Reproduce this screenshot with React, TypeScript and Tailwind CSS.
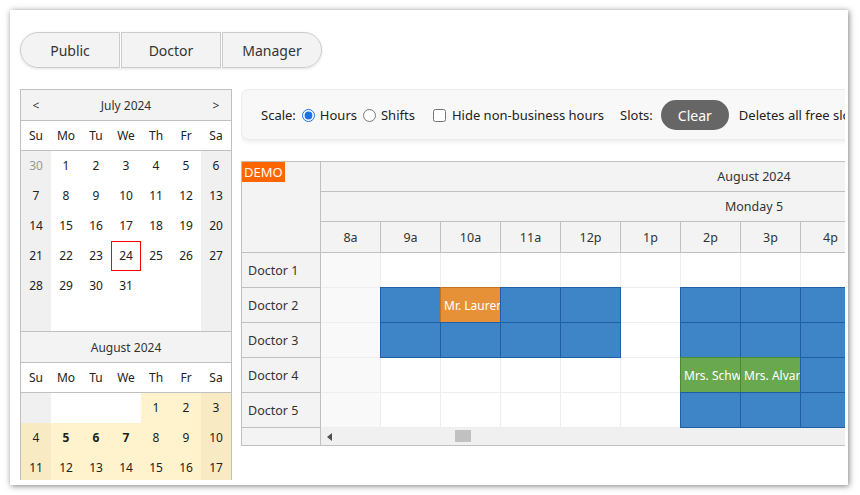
const july: { d: number; out?: boolean }[][] = [
  [{ d: 30, out: true }, { d: 1 }, { d: 2 }, { d: 3 }, { d: 4 }, { d: 5 }, { d: 6 }],
  [{ d: 7 }, { d: 8 }, { d: 9 }, { d: 10 }, { d: 11 }, { d: 12 }, { d: 13 }],
  [{ d: 14 }, { d: 15 }, { d: 16 }, { d: 17 }, { d: 18 }, { d: 19 }, { d: 20 }],
  [{ d: 21 }, { d: 22 }, { d: 23 }, { d: 24 }, { d: 25 }, { d: 26 }, { d: 27 }],
  [{ d: 28 }, { d: 29 }, { d: 30 }, { d: 31 }, { d: 0 }, { d: 0 }, { d: 0 }],
  [{ d: 0 }, { d: 0 }, { d: 0 }, { d: 0 }, { d: 0 }, { d: 0 }, { d: 0 }],
];

const august: number[][] = [
  [0, 0, 0, 0, 1, 2, 3],
  [4, 5, 6, 7, 8, 9, 10],
  [11, 12, 13, 14, 15, 16, 17],
];

const dayNames = ["Su", "Mo", "Tu", "We", "Th", "Fr", "Sa"];
const hours = ["8a", "9a", "10a", "11a", "12p", "1p", "2p", "3p", "4p", "5p"];

type Slot = { kind: "free" | "booked" | "confirmed"; text?: string };

// slots per doctor, keyed by hour index
const slots: Record<number, Slot>[] = [
  {},
  {
    1: { kind: "free" },
    2: { kind: "booked", text: "Mr. Laurent" },
    3: { kind: "free" },
    4: { kind: "free" },
    6: { kind: "free" },
    7: { kind: "free" },
    8: { kind: "free" },
    9: { kind: "free" },
  },
  {
    1: { kind: "free" },
    2: { kind: "free" },
    3: { kind: "free" },
    4: { kind: "free" },
    6: { kind: "free" },
    7: { kind: "free" },
    8: { kind: "free" },
    9: { kind: "free" },
  },
  {
    6: { kind: "confirmed", text: "Mrs. Schwartz" },
    7: { kind: "confirmed", text: "Mrs. Alvarez" },
    8: { kind: "free" },
    9: { kind: "free" },
  },
  {
    6: { kind: "free" },
    7: { kind: "free" },
    8: { kind: "free" },
    9: { kind: "free" },
  },
];

const slotStyle: Record<Slot["kind"], string> = {
  free: "bg-[#3d85c6] border-[#1f5fa3]",
  booked: "bg-[#e69138] border-[#c4731f]",
  confirmed: "bg-[#6aa84f] border-[#4b8a33]",
};

function ViewSwitcher() {
  const items = ["Public", "Doctor", "Manager"];
  return (
    <div className="flex h-[36px] w-[302px] shadow-[0_1px_3px_rgba(0,0,0,0.12)] rounded-full">
      {items.map((label, i) => (
        <button
          key={label}
          className={
            "w-[100px] h-full border border-[#cccccc] bg-[#f3f3f3] text-[14px] text-[#333] pt-[1px] " +
            (i === 0 ? "rounded-l-full " : "") +
            (i === items.length - 1 ? "rounded-r-full " : "") +
            (i > 0 ? "ml-[1px]" : "")
          }
        >
          {label}
        </button>
      ))}
    </div>
  );
}

function MonthHeader({ title, nav }: { title: string; nav?: boolean }) {
  return (
    <>
      <div className="h-[31px] bg-[#f3f3f3] border-b border-[#c0c0c0] flex items-center text-[12px] text-[#333] pt-[1px]">
        <div className="w-[30px] text-center">{nav ? "<" : ""}</div>
        <div className="flex-1 text-center">{title}</div>
        <div className="w-[30px] text-center">{nav ? ">" : ""}</div>
      </div>
      <div className="h-[30px] grid grid-cols-7 border-b border-[#c0c0c0] bg-white text-[12px] text-[#222]">
        {dayNames.map((n) => (
          <div key={n} className="flex items-center justify-center">
            {n}
          </div>
        ))}
      </div>
    </>
  );
}

function Navigator() {
  return (
    <div className="w-[212px] shrink-0 border border-[#c0c0c0] text-[12px] text-[#222]">
      <MonthHeader title="July 2024" nav />
      <div className="grid grid-cols-7">
        {july.flat().map((c, i) => {
          const col = i % 7;
          const weekend = col === 0 || col === 6;
          return (
            <div
              key={i}
              className={
                "h-[30px] flex items-center justify-center " +
                (weekend ? "bg-[#f0f0f0] " : "bg-white ") +
                (c.out ? "text-[#999] " : "") +
                (c.d === 24 && !c.out ? "border border-[#ff0000]" : "")
              }
            >
              {c.d > 0 ? c.d : ""}
            </div>
          );
        })}
      </div>
      <div className="border-t border-[#c0c0c0]">
        <MonthHeader title="August 2024" />
        <div className="grid grid-cols-7">
          {august.flat().map((d, i) => {
            const col = i % 7;
            const weekend = col === 0 || col === 6;
            let bg = weekend ? "bg-[#f0f0f0]" : "bg-white";
            if (d > 0) bg = weekend ? "bg-[#f8ebc4]" : "bg-[#fff3cd]";
            const bold = d >= 5 && d <= 7;
            return (
              <div
                key={i}
                className={"h-[30px] flex items-center justify-center " + bg + (bold ? " font-bold" : "")}
              >
                {d > 0 ? d : ""}
              </div>
            );
          })}
        </div>
      </div>
    </div>
  );
}

function Toolbar() {
  return (
    <div className="w-[720px] h-[51px] rounded-[8px] bg-[#f8f8f8] border border-[#ececec] shadow-[0_2px_4px_rgba(0,0,0,0.08)] flex items-center pl-[19px] pt-[1px] text-[13px] text-[#222] whitespace-nowrap">
      <span className="pt-[2px]">Scale:</span>
      <label className="flex items-center ml-[6px]">
        <input type="radio" name="scale" defaultChecked className="w-[13px] h-[13px] m-0 accent-[#1a73e8]" />
        <span className="ml-[5px] pt-[2px]">Hours</span>
      </label>
      <label className="flex items-center ml-[6px]">
        <input type="radio" name="scale" className="w-[13px] h-[13px] m-0" />
        <span className="ml-[5px] pt-[2px]">Shifts</span>
      </label>
      <label className="flex items-center ml-[18px]">
        <input type="checkbox" className="w-[13px] h-[13px] m-0" />
        <span className="ml-[6px] pt-[2px]">Hide non-business hours</span>
      </label>
      <span className="ml-[16px] pt-[2px]">Slots:</span>
      <button className="ml-[8px] w-[68px] h-[30px] rounded-full bg-[#666666] text-white text-[14px]">Clear</button>
      <span className="ml-[10px] pt-[2px]">Deletes all free slots this month</span>
    </div>
  );
}

function Scheduler() {
  return (
    <div className="w-[700px] border border-[#c0c0c0] flex text-[12.5px] text-[#333]">
      {/* row headers */}
      <div className="w-[79px] shrink-0 border-r border-[#c0c0c0] bg-[#f3f3f3]">
        <div className="h-[91px] border-b border-[#c0c0c0]">
          <span className="inline-block bg-[#ff6600] text-white text-[13px] leading-[20px] px-[2px]">DEMO</span>
        </div>
        {[1, 2, 3, 4, 5].map((n) => (
          <div key={n} className="h-[35px] border-b border-[#c0c0c0] flex items-center pl-[6px] pt-[3px]">
            Doctor {n}
          </div>
        ))}
        <div className="h-[17px]" />
      </div>
      {/* timeline */}
      <div className="flex-1 min-w-0 overflow-hidden">
        <div className="bg-[#f3f3f3]">
          <div className="h-[30px] w-[866px] border-b border-[#c0c0c0] flex items-center justify-center pt-[2px]">
            August 2024
          </div>
          <div className="h-[30px] w-[866px] border-b border-[#c0c0c0] flex items-center justify-center pt-[2px]">
            Monday 5
          </div>
          <div className="h-[31px] flex border-b border-[#c0c0c0]">
            {hours.map((h) => (
              <div
                key={h}
                className="w-[60px] shrink-0 border-r border-[#c0c0c0] flex items-center justify-center pt-[2px]"
              >
                {h}
              </div>
            ))}
          </div>
        </div>
        {slots.map((row, r) => (
          <div key={r} className="h-[35px] flex border-b border-[#eeeeee]">
            {hours.map((h, c) => {
              const s = row[c];
              return (
                <div
                  key={h}
                  className={
                    "relative w-[60px] shrink-0 border-r border-[#eeeeee] " + (c === 0 ? "bg-[#f9f9f9]" : "bg-white")
                  }
                >
                  {s && (
                    <div
                      className={
                        "absolute -left-px -top-px w-[61px] h-[36px] border overflow-hidden whitespace-nowrap text-white text-[12px] leading-[36px] pl-[3px] " +
                        slotStyle[s.kind]
                      }
                    >
                      {s.text}
                    </div>
                  )}
                </div>
              );
            })}
          </div>
        ))}
        <div className="h-[17px] bg-[#f0f0f0] flex items-center relative">
          <svg width="5" height="8" viewBox="0 0 5 8" className="ml-[6px]">
            <path d="M5 0 L0 4 L5 8 Z" fill="#505050" />
          </svg>
          <div className="absolute left-[134px] top-[2px] w-[16px] h-[12px] bg-[#c1c1c1]" />
        </div>
      </div>
    </div>
  );
}

export default function App() {
  return (
    <div className="w-[860px] h-[495px] bg-white pt-[10px] pl-[10px] font-['Segoe_UI','Noto_Sans',sans-serif]">
      <div className="w-[838px] h-[475px] bg-white shadow-[1px_1px_6px_rgba(0,0,0,0.5)]">
        <div className="w-[835px] h-[470px] overflow-hidden pl-[10px] pt-[22px]">
          <ViewSwitcher />
          <div className="flex mt-[21px] gap-[9px]">
            <Navigator />
            <div className="w-[604px] min-w-0 overflow-hidden">
              <Toolbar />
              <div className="mt-[21px]">
                <Scheduler />
              </div>
            </div>
          </div>
        </div>
      </div>
    </div>
  );
}
